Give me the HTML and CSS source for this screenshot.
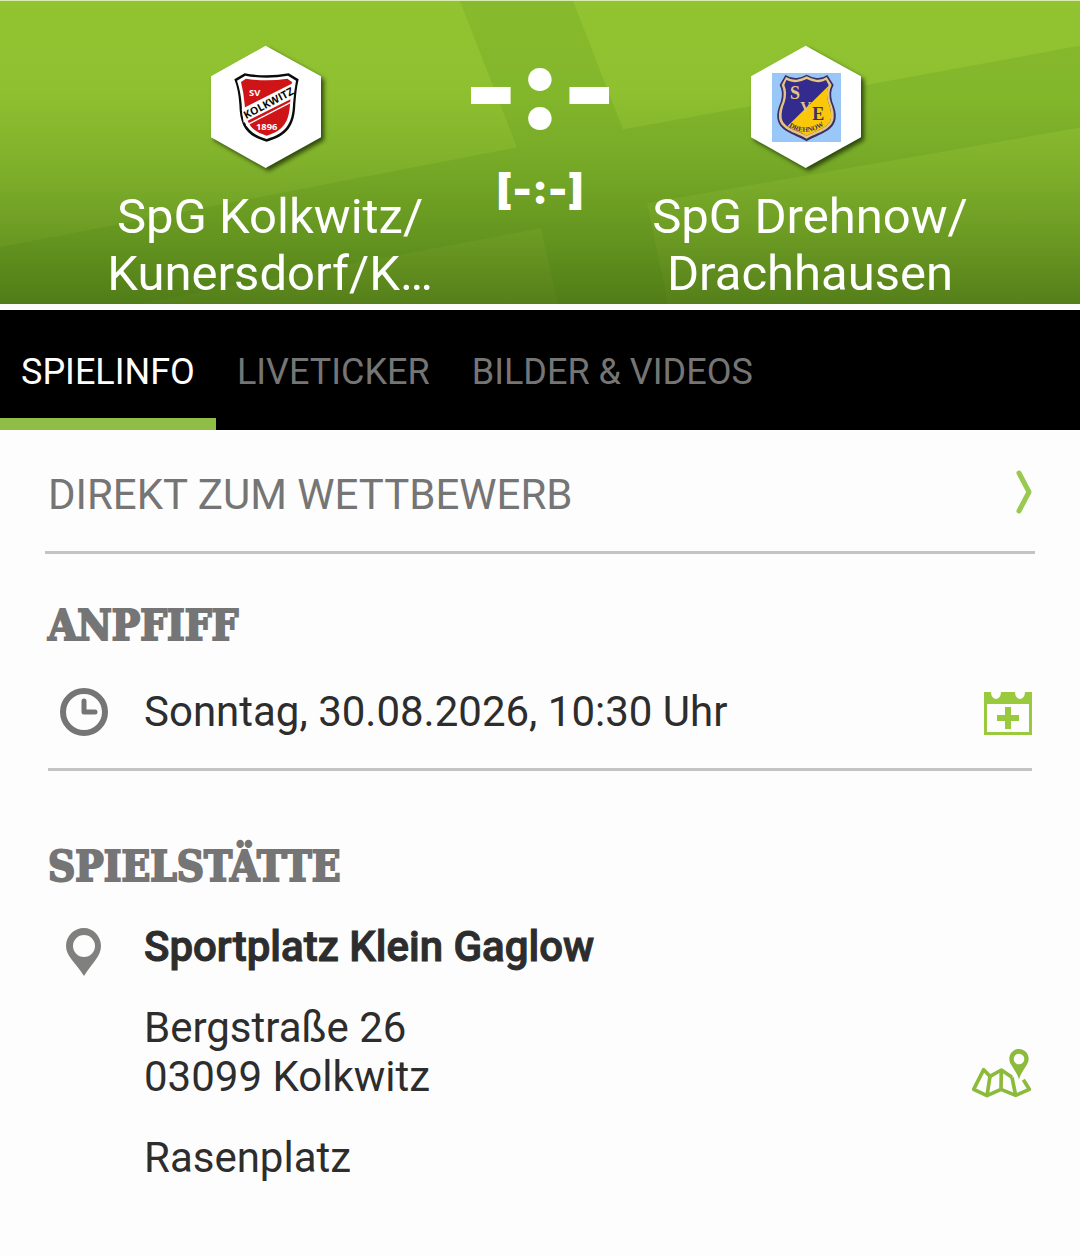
FILE: index.html
```html
<!DOCTYPE html>
<html lang="de">
<head>
<meta charset="utf-8">
<meta name="viewport" content="width=device-width, initial-scale=1">
<title>Spielinfo</title>
<link rel="stylesheet" href="styles.css">
</head>
<body>
<header class="match">
  <svg class="match-bg" viewBox="0 0 1080 304" preserveAspectRatio="none" aria-hidden="true">
    <path class="band" d="M460 0H573L623 129L1080 45V127L647 203L668 304H558L541 228L138 304H0V247L517 147Z"/>
  </svg>
  <div class="team team-home">
    <svg class="crest" viewBox="0 0 420 420" role="img" aria-label="SV Kolkwitz 1896">
      <path class="hex" d="M197 29L363 121V304L197 396L33 304V121Z"/>
      <path d="M134 112Q200 124 266 112L296 130Q289 160 286 205C284 270 262 300 200 317C138 300 120 270 118 205Q115 160 103 130Z" fill="#0b0b0b"/>
      <path d="M136 119Q200 131 264 119L288 134Q282 165 279 205C277 264 257 293 200 309C143 293 127 264 125 205Q122 165 111 134Z" fill="#fff"/>
      <path d="M138 128Q200 138 262 128L276 138Q272 170 270 205C267 258 250 285 200 299C150 285 137 258 134 205Q131 170 123 138Z" fill="#cf1418"/>
      <path d="M125 219L284 139L279 186L131 260Z" fill="#fff"/>
      <path d="M138 268L272 199" stroke="#fff" stroke-width="4"/>
      <text x="147" y="180" font-size="28" fill="#fff" class="crest-sans">SV</text>
      <text x="168" y="283" font-size="28" fill="#fff" class="crest-sans">1896</text>
      <text transform="translate(138 250) rotate(-28)" font-size="32" fill="#0b0b0b" class="crest-sans">KOLKWITZ</text>
    </svg>
    <h2 class="team-name">SpG Kolkwitz/<br>Kunersdorf/K…</h2>
  </div>
  <div class="score">
    <div class="score-main">-:-</div>
    <div class="score-half">[-:-]</div>
  </div>
  <div class="team team-away">
    <svg class="crest" viewBox="0 0 420 420" role="img" aria-label="SVE Drehnow">
      <defs><path id="crest-arc" d="M146 272Q200 306 256 266"/></defs>
      <path class="hex" d="M197 29L363 121V304L197 396L33 304V121Z"/>
      <path d="M96 111H303V318H96Z" fill="#99c8f8"/>
      <path d="M136 117Q155 128 171 126Q185 124 200 116Q215 124 229 126Q246 128 262 117L281 147Q268 170 277 198Q289 225 287 247C282 290 225 298 200 316C175 298 117 290 112 247Q110 225 122 198Q131 170 119 147Z" fill="#393068"/>
      <path d="M138 123Q155 133 171 131Q185 129 200 121Q215 129 229 131Q246 133 260 123L275 147Q263 170 272 199Q283 225 281 246C276 284 225 292 200 308C175 292 122 284 117 246Q115 225 127 199Q136 170 125 147Z" fill="#e5c583"/>
      <path d="M139 132Q155 140 171 138Q185 136 200 129Q215 136 229 138Q246 140 258 132L266 147Q256 170 265 199Q275 225 273 245C268 277 225 284 200 299C175 284 130 277 125 245Q123 225 134 199Q143 170 133 147Z" fill="#332c8e"/>
      <path d="M266 149Q256 170 265 199Q275 225 273 245C268 277 225 284 200 299C180 287 158 284 143 270Z" fill="#fbc70b"/>
      <g class="crest-serif">
        <text x="150" y="189" font-size="54" fill="#e5c583">S</text>
        <text x="181" y="227" font-size="46" fill="#e5c583">V</text>
        <text x="217" y="253" font-size="54" fill="#393068">E</text>
        <text font-size="21" fill="#393068"><textPath href="#crest-arc">DREHNOW</textPath></text>
      </g>
    </svg>
    <h2 class="team-name">SpG Drehnow/<br>Drachhausen</h2>
  </div>
</header>

<nav class="tabs">
  <a class="tab tab-active" href="#spielinfo" aria-current="page">SPIELINFO</a>
  <a class="tab" href="#liveticker">LIVETICKER</a>
  <a class="tab" href="#medien">BILDER &amp; VIDEOS</a>
</nav>

<main class="content" id="spielinfo">
  <a class="direct" href="#wettbewerb">
    <span>DIREKT ZUM WETTBEWERB</span>
    <svg class="chevron" viewBox="0 0 16 50" aria-hidden="true"><path d="M3 3L13 22L3 41"/></svg>
  </a>

  <section class="section">
    <h3 class="heading">ANPFIFF</h3>
    <div class="row row-line">
      <svg class="icon" viewBox="0 0 48 48" aria-hidden="true"><circle cx="24" cy="24" r="21" fill="none" stroke="#757575" stroke-width="6"/><path d="M24 13V24H35" fill="none" stroke="#757575" stroke-width="5" stroke-linecap="round" stroke-linejoin="round"/></svg>
      <p class="text">Sonntag, 30.08.2026, 10:30 Uhr</p>
      <button class="action" type="button" aria-label="Zum Kalender hinzufügen">
        <svg width="48" height="48" viewBox="0 -4 48 48" aria-hidden="true"><path fill="#99c93c" fill-rule="evenodd" d="M0 0H7A5 7 0 0 0 17 0H31A5 7 0 0 0 41 0H48V43H0ZM3 12V40H45V12ZM21 15H27V23H35V29H27V37H21V29H13V23H21Z"/></svg>
      </button>
    </div>
  </section>

  <section class="section section-venue">
    <h3 class="heading">SPIELSTÄTTE</h3>
    <div class="row venue">
      <svg class="icon" viewBox="0 0 48 48" aria-hidden="true"><path fill="#80807e" fill-rule="evenodd" d="M24 0C14 0 6 8 6 18C6 28 15 34 24 48C33 34 41 28 41 18C41 8 33 0 24 0ZM24 7A11 11 0 1 1 24 29A11 11 0 1 1 24 7Z"/></svg>
      <div class="text">
        <p class="venue-name">Sportplatz Klein Gaglow</p>
        <p class="para">Bergstraße 26<br>03099 Kolkwitz</p>
        <p class="para">Rasenplatz</p>
      </div>
      <button class="action" type="button" aria-label="Karte öffnen">
        <svg width="60" height="50" viewBox="0 0 180 150" aria-hidden="true"><g fill="none" stroke="#8cba3b" stroke-width="11" stroke-linejoin="round"><path d="M120 85L88 63L54 82L35 62L5 121L45 140L87 121L131 139L172 121L154 92"/><path d="M54 82L45 140M88 63L87 121M120 85L131 139"/></g><path fill="#8cba3b" fill-rule="evenodd" d="M141 0C125 0 112 13 112 30C112 48 132 62 141 91C150 62 170 48 170 30C170 13 157 0 141 0ZM141 14A16 16 0 1 1 141 46A16 16 0 1 1 141 14Z"/></svg>
      </button>
    </div>
  </section>
</main>
</body>
</html>
```
FILE: styles.css
```css
* {
  box-sizing: border-box;
}

body {
  margin: 0;
  background: #fdfdfd;
  color: #2d2d2d;
  font-family: Roboto, "Liberation Sans", sans-serif;
  font-size: 42px;
  line-height: 49px;
}

h2, h3, p {
  margin: 0;
  font-weight: 400;
}

a {
  color: inherit;
  text-decoration: none;
}

button {
  padding: 0;
  border: 0;
  background: none;
  cursor: pointer;
}

svg {
  display: block;
  flex: none;
}

.match {
  position: relative;
  display: grid;
  grid-template-columns: 1fr 1fr;
  border-top: 1px solid #d9ecae;
  border-bottom: 6px solid #fdfdfd;
  background: linear-gradient(#92c431 0, #8ec030 30%, #7fb02b 55%, #6b9a23 78%, #557f1a 100%);
  color: #fff;
}

.match-bg {
  position: absolute;
  width: 100%;
  height: 100%;
}

.band {
  fill: #2f6a08;
  fill-opacity: 0.11;
}

.team {
  position: relative;
  grid-row: 1;
  display: flex;
  flex-direction: column;
  align-items: center;
  padding: 35px 0 2px;
}

.team-home {
  grid-column: 1;
}

.team-away {
  grid-column: 2;
}

.crest {
  width: 140px;
  height: 140px;
  overflow: visible;
}

.hex {
  fill: #fff;
  filter: drop-shadow(9px 9px 7px rgba(20, 40, 0, 0.75));
}

.crest-sans {
  font-family: "Open Sans", sans-serif;
  font-weight: 700;
}

.crest-serif {
  font-family: "Liberation Serif", serif;
  font-weight: 700;
}

.team-name {
  margin-top: 12px;
  font-size: 49px;
  line-height: 57px;
  text-align: center;
}

.score {
  position: relative;
  z-index: 1;
  grid-row: 1;
  grid-column: 1 / 3;
  justify-self: center;
  text-align: center;
  font-family: Inter, "DejaVu Sans", sans-serif;
  font-weight: 900;
}

.score-main {
  padding-top: 26px;
  font-size: 116px;
  line-height: 120px;
}

.score-half {
  padding-top: 10px;
  font-size: 42px;
  line-height: 64px;
}

.tabs {
  display: flex;
  background: #000;
  color: #757575;
  font-size: 36px;
  line-height: 42px;
}

.tab {
  padding: 41px 21px 25px;
  border-bottom: 12px solid transparent;
}

.tab-active {
  color: #fff;
  border-color: #8fbd46;
}

.content {
  padding: 0 45px 36px;
}

.direct {
  display: flex;
  align-items: center;
  justify-content: space-between;
  padding: 40px 3px 32px;
  border-bottom: 3px solid #c4c4c4;
  color: #757575;
}

.chevron {
  width: 16px;
  height: 50px;
  margin-bottom: -1px;
  fill: none;
  stroke: #99c94f;
  stroke-width: 5;
  stroke-linecap: round;
  stroke-linejoin: round;
}

.section {
  padding: 47px 3px 0;
}

.heading {
  color: #757575;
  font-family: "DejaVu Serif Condensed", "DejaVu Serif", serif;
  font-size: 42px;
  font-weight: 700;
  -webkit-text-stroke: 2px #757575;
}

.row {
  display: flex;
  align-items: center;
  gap: 36px;
  padding: 37px 0 32px 12px;
}

.row-line {
  border-bottom: 3px solid #c4c4c4;
}

.icon {
  width: 48px;
  height: 48px;
}

.text {
  flex: 1;
}

.section-venue {
  padding-top: 71px;
}

.venue {
  padding-top: 31px;
}

.venue .icon {
  align-self: flex-start;
  margin-top: 6px;
}

.venue .action {
  margin-top: 44px;
}

.venue-name {
  font-weight: 500;
  -webkit-text-stroke: 1px #2d2d2d;
}

.para {
  margin-top: 32px;
}
```
